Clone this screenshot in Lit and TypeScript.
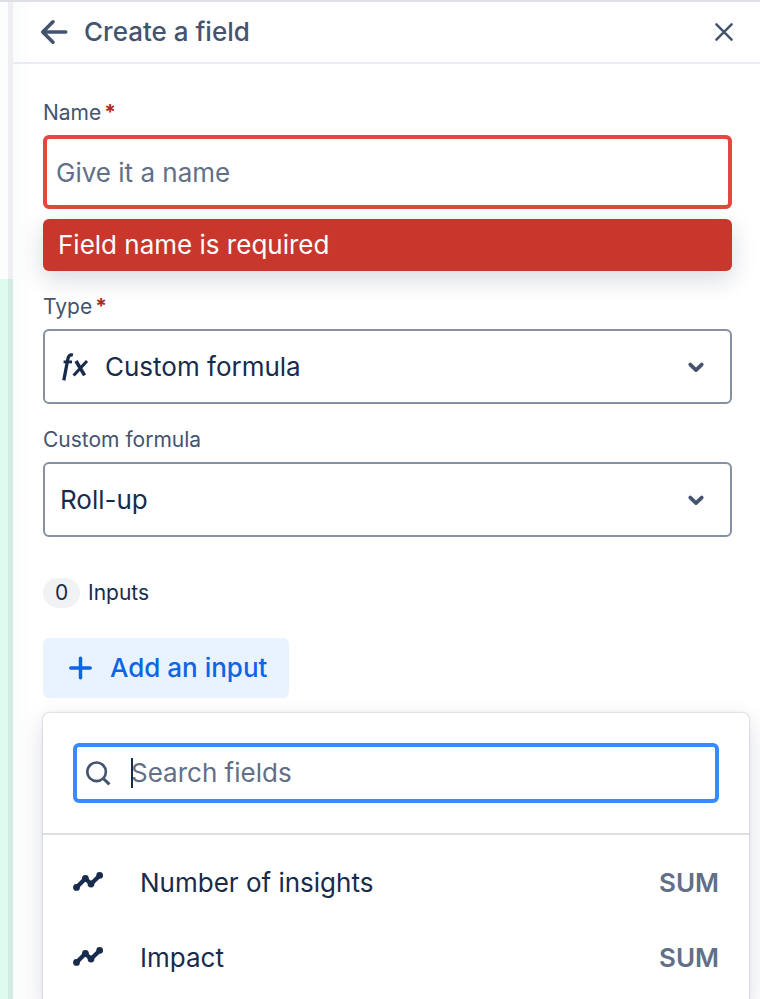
import { LitElement, html, css, svg } from "lit";
import { customElement, property } from "lit/decorators.js";

const arrowIcon = html`<svg width="28" height="26" viewBox="0 0 28 26" aria-hidden="true">
  <path d="M13 2.8 2.7 13 13 23.2M3.2 13H25.7" fill="none" stroke="currentColor" stroke-width="3.6" stroke-linecap="round" stroke-linejoin="round" />
</svg>`;

const closeIcon = html`<svg width="20" height="20" viewBox="0 0 20 20" aria-hidden="true">
  <path d="M2.4 2.4 17.6 17.6M17.6 2.4 2.4 17.6" fill="none" stroke="currentColor" stroke-width="2.5" stroke-linecap="round" />
</svg>`;

const chevronIcon = html`<svg width="18" height="12" viewBox="0 0 18 12" aria-hidden="true">
  <path d="M3.3 3.6 9 9.1l5.7-5.5" fill="none" stroke="currentColor" stroke-width="3.8" stroke-linecap="round" stroke-linejoin="round" />
</svg>`;

const formulaIcon = html`<svg width="28" height="30" viewBox="0 0 28 30" aria-hidden="true">
  <g fill="none" stroke="currentColor">
    <path d="M11.9 3.1C8.6 2.2 7.4 4 6.8 7.2L2.8 28.4" stroke-width="3.3" />
    <path d="M2.6 9.9H11" stroke-width="2.8" />
    <path d="M15 9 23.6 23.4" stroke-width="3.5" />
    <path d="M26 9 12.6 23.4" stroke-width="3" />
  </g>
</svg>`;

const plusIcon = html`<svg width="24" height="24" viewBox="0 0 24 24" aria-hidden="true">
  <path d="M12.5 2.3V21.7M2.8 12H22.2" fill="none" stroke="currentColor" stroke-width="3.5" stroke-linecap="round" />
</svg>`;

const searchIcon = html`<svg width="26" height="26" viewBox="0 0 26 26" aria-hidden="true">
  <circle cx="11.6" cy="11.8" r="9.3" fill="none" stroke="currentColor" stroke-width="2.6" />
  <path d="M18.3 18.5 24.4 24.4" stroke="currentColor" stroke-width="3" />
</svg>`;

const trendPoints = [[3.5, 16.4], [12.4, 7.4], [18, 13], [26.7, 4.4]];
const trendIcon = html`<svg width="30" height="24" viewBox="0 0 30 24" aria-hidden="true">
  <path d="M3.5 16.4 12.4 7.4 18 13 26.7 4.4" fill="none" stroke="currentColor" stroke-width="4.2" stroke-linejoin="round" />
  ${trendPoints.map(([x, y]) => svg`<circle cx=${x} cy=${y} r="3.4" fill="currentColor" />`)}
</svg>`;

const base = css`
  * {
    box-sizing: border-box;
  }
  svg {
    display: block;
    flex: none;
  }
  button,
  input,
  select {
    font: inherit;
    color: inherit;
    margin: 0;
    outline: none;
  }
  button {
    border: 0;
    background: none;
    padding: 0;
    cursor: pointer;
  }
`;

@customElement("field-picker")
class FieldPicker extends LitElement {
  @property({ attribute: false }) fields: { name: string; method: string }[] = [];

  static styles = [
    base,
    css`
      :host {
        display: block;
        background: #fff;
        border-radius: 6px;
        box-shadow: 0 0 2px rgba(9, 30, 66, 0.35), 0 8px 24px rgba(9, 30, 66, 0.15);
      }
      .search {
        padding: 30px;
        border-bottom: 2px solid #dcdfe4;
      }
      .box {
        position: relative;
        display: flex;
        align-items: center;
        gap: 20px;
        height: 60px;
        padding: 0 8px;
        border: 4px solid #388bff;
        border-radius: 6px;
        color: #44546f;
      }
      .entry {
        position: relative;
        flex: 1;
        display: flex;
      }
      .caret {
        position: absolute;
        left: 0;
        top: 0;
        width: 2px;
        height: 30px;
        background: #172b4d;
      }
      input {
        flex: 1;
        min-width: 0;
        height: 30px;
        padding: 0;
        border: 0;
        background: none;
        color: #172b4d;
        caret-color: transparent;
      }
      input::placeholder {
        color: #626f86;
        opacity: 1;
      }
      ul {
        list-style: none;
        margin: 0;
        padding: 10px 0;
      }
      .row {
        display: flex;
        align-items: center;
        width: 100%;
        height: 75px;
        padding: 0 30px;
        gap: 37px;
        text-align: left;
      }
      .name {
        flex: 1;
      }
      .method {
        color: #626f86;
        font-weight: 600;
      }
    `,
  ];

  render() {
    return html`
      <div class="search">
        <div class="box">
          ${searchIcon}
          <div class="entry">
            <input type="text" placeholder="Search fields" aria-label="Search fields" />
            <span class="caret"></span>
          </div>
        </div>
      </div>
      <ul>
        ${this.fields.map(
          (f) => html`<li>
            <button class="row" type="button">
              ${trendIcon}<span class="name">${f.name}</span><span class="method">${f.method}</span>
            </button>
          </li>`
        )}
      </ul>
    `;
  }
}

@customElement("app-root")
class AppRoot extends LitElement {
  static styles = [
    base,
    css`
      :host {
        display: grid;
        grid-template-columns: 13px minmax(0, 1fr);
        height: 100vh;
        overflow: hidden;
        border-top: 2px solid #dfdfe6;
        box-sizing: border-box;
        background: #fff;
        color: #172b4d;
        font-family: Inter, "Liberation Sans", sans-serif;
        font-size: 26px;
        line-height: 32px;
      }
      .board {
        display: flex;
        flex-direction: column;
        background: #fcfefd;
        border-right: 5px solid #eeeef3;
      }
      .lane {
        flex: 1;
        margin-top: 277px;
        margin-right: -5px;
        background: #dcfaee;
        border-right: 5px solid #d1ebe2;
      }
      .panel {
        display: flex;
        flex-direction: column;
        min-height: 0;
        background: linear-gradient(to right, #fafbfb, #fff 20px);
      }
      header {
        display: flex;
        align-items: center;
        height: 62px;
        padding: 0 26px 0 27px;
        border-bottom: 2px solid #ebecf1;
        color: #44546f;
      }
      h1 {
        flex: 1;
        margin: 0 0 0 16px;
        font-size: 26px;
        font-weight: 500;
      }
      form {
        flex: 1;
        min-height: 0;
        overflow-y: auto;
        scrollbar-width: none;
        padding: 37px 28px 0 30px;
      }
      .label {
        display: flex;
        gap: 3px;
        margin-bottom: 10px;
        font-size: 21px;
        line-height: 24px;
        color: #44546f;
      }
      .required {
        color: #ae2a19;
        font-weight: 700;
      }
      .text {
        display: block;
        width: 100%;
        height: 74px;
        padding: 0 9px;
        border: 4px solid #e2483d;
        border-radius: 6px;
        background: #fff;
      }
      .text::placeholder {
        color: #626f86;
        opacity: 1;
      }
      .error {
        margin: 10px 0 24px;
        padding: 10px 15px;
        border-radius: 6px;
        background: #c9372c;
        color: #fff;
        box-shadow: 0 8px 24px rgba(9, 30, 66, 0.17);
      }
      .choice {
        position: relative;
        margin-bottom: 24px;
      }
      select {
        display: block;
        appearance: none;
        width: 100%;
        height: 75px;
        padding: 0 60px 0 15px;
        border: 2px solid #8590a2;
        border-radius: 6px;
        background: #fff;
      }
      .with-icon select {
        padding-left: 60px;
      }
      .lead,
      .chevron {
        position: absolute;
        top: 0;
        bottom: 0;
        display: flex;
        align-items: center;
        pointer-events: none;
      }
      .lead {
        left: 18px;
      }
      .chevron {
        right: 27px;
        color: #44546f;
      }
      .count {
        display: flex;
        align-items: center;
        gap: 8px;
        margin-top: 41px;
        font-size: 21px;
        line-height: 30px;
      }
      .badge {
        width: 37px;
        border-radius: 15px;
        background: #f1f2f4;
        text-align: center;
      }
      .add {
        display: flex;
        align-items: center;
        gap: 18px;
        height: 60px;
        margin: 30px 0 15px;
        padding: 0 22px 0 25px;
        border-radius: 6px;
        background: #e9f2ff;
        color: #0c66e4;
        font-weight: 500;
      }
      field-picker {
        margin-right: -17px;
      }
    `,
  ];

  render() {
    return html`
      <div class="board"><div class="lane"></div></div>
      <main class="panel">
        <header>
          <button type="button" aria-label="Back">${arrowIcon}</button>
          <h1>Create a field</h1>
          <button type="button" aria-label="Close">${closeIcon}</button>
        </header>
        <form>
          <label class="label" for="name">Name <span class="required">*</span></label>
          <input class="text" id="name" type="text" placeholder="Give it a name" aria-describedby="name-error" />
          <div class="error" id="name-error">Field name is required</div>

          <label class="label" for="type">Type <span class="required">*</span></label>
          <div class="choice with-icon">
            <select id="type"><option>Custom formula</option></select>
            <span class="lead">${formulaIcon}</span>
            <span class="chevron">${chevronIcon}</span>
          </div>

          <label class="label" for="formula">Custom formula</label>
          <div class="choice">
            <select id="formula"><option>Roll-up</option></select>
            <span class="chevron">${chevronIcon}</span>
          </div>

          <div class="count"><span class="badge">0</span><span>Inputs</span></div>
          <button class="add" type="button">${plusIcon}<span>Add an input</span></button>
          <field-picker
            .fields=${[
              { name: "Number of insights", method: "SUM" },
              { name: "Impact", method: "SUM" },
            ]}
          ></field-picker>
        </form>
      </main>
    `;
  }
}
